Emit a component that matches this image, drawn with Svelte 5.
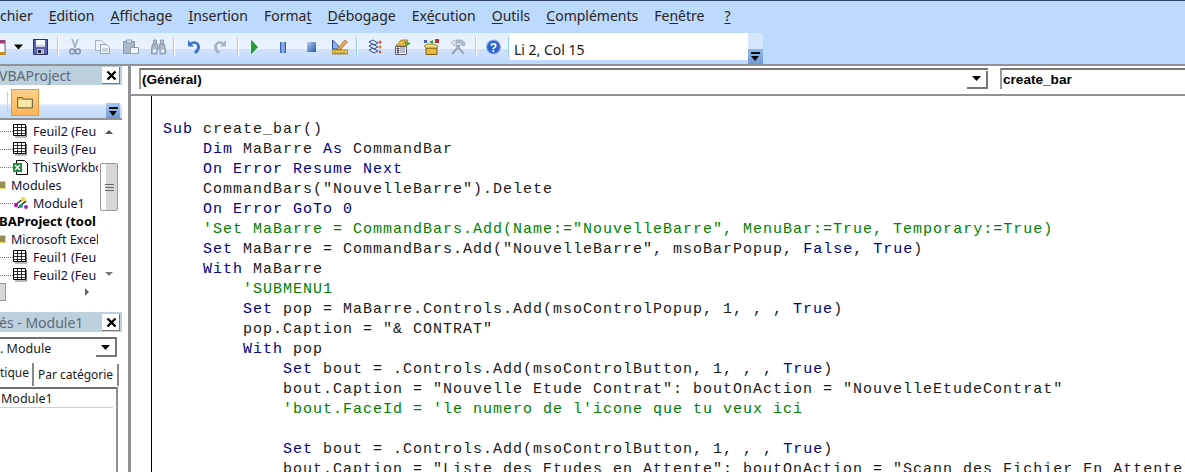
<script>
	const menus = [
		['', 'chier'], ['E', 'dition'], ['A', 'ffichage'], ['I', 'nsertion'], ['Forma', 't', ''],
		['D', 'ébogage'], ['Ex', 'é', 'cution'], ['O', 'utils'], ['C', 'ompléments'], ['Fe', 'n', 'être'], ['?', '']
	];

	const K = 'k';
	const C = 'c';
	// every line: list of [class, text]
	const code = [
		[[K, 'Sub'], ['', ' create_bar()']],
		[['', '    '], [K, 'Dim'], ['', ' MaBarre '], [K, 'As'], ['', ' CommandBar']],
		[['', '    '], [K, 'On Error Resume Next']],
		[['', '    CommandBars("NouvelleBarre").Delete']],
		[['', '    '], [K, 'On Error GoTo 0']],
		[['', '    '], [C, `'Set MaBarre = CommandBars.Add(Name:="NouvelleBarre", MenuBar:=True, Temporary:=True)`]],
		[['', '    '], [K, 'Set'], ['', ' MaBarre = CommandBars.Add("NouvelleBarre", msoBarPopup, '], [K, 'False'], ['', ', '], [K, 'True'], ['', ')']],
		[['', '    '], [K, 'With'], ['', ' MaBarre']],
		[['', '        '], [C, `'SUBMENU1`]],
		[['', '        '], [K, 'Set'], ['', ' pop = MaBarre.Controls.Add(msoControlPopup, 1, , , '], [K, 'True'], ['', ')']],
		[['', '        pop.Caption = "& CONTRAT"']],
		[['', '        '], [K, 'With'], ['', ' pop']],
		[['', '            '], [K, 'Set'], ['', ' bout = .Controls.Add(msoControlButton, 1, , , '], [K, 'True'], ['', ')']],
		[['', '            bout.Caption = "Nouvelle Etude Contrat": boutOnAction = "NouvelleEtudeContrat"']],
		[['', '            '], [C, `'bout.FaceId = 'le numero de l'icone que tu veux ici`]],
		[['', ' ']],
		[['', '            '], [K, 'Set'], ['', ' bout = .Controls.Add(msoControlButton, 1, , , '], [K, 'True'], ['', ')']],
		[['', '            bout.Caption = "Liste des Etudes en Attente": boutOnAction = "Scann des Fichier En Attente"']]
	];

	const tree = [
		['sheet', 'Feuil2 (Feu', ''],
		['sheet', 'Feuil3 (Feu', ''],
		['book', 'ThisWorkbo', ''],
		['folder', 'Modules', 'low'],
		['module', 'Module1', ''],
		['', 'BAProject (tool', 'bold'],
		['folder', 'Microsoft Excel', 'low'],
		['sheet', 'Feuil1 (Feu', ''],
		['sheet', 'Feuil2 (Feu', '']
	];
</script>

{#snippet closeIcon()}
	<svg width="11" height="11" viewBox="0 0 11 11"><path d="M1.500 1.500l8 8M9.500 1.500l-8 8" stroke="#000" stroke-width="2.400"/></svg>
{/snippet}

<div class="vbe">
	<nav class="menubar">
		{#each menus as m}
			<span class="menu">
				{#if m.length === 3}{m[0]}<u>{m[1]}</u>{m[2]}{:else if m[0] === ''}{m[1]}{:else}<u>{m[0].slice(-1)}</u>{m[1]}{/if}
			</span>
		{/each}
	</nav>

	<div class="toolbar">
		<div class="tools">
			<svg class="ic" style="width:6px" viewBox="0 0 6 16"><rect x="-7" y="1.500" width="12" height="12" fill="#fff" stroke="#6a5a70"/><rect x="-7" y="1.500" width="12" height="3" fill="#a83a78"/><rect x="-7" y="13" width="13" height="3" fill="#c89020"/></svg>
			<svg class="ic" style="width:9px;margin-left:8px" viewBox="0 0 9 16"><path d="M0 5.500h9L4.500 10.500z" fill="#000"/></svg>
			<svg class="ic" style="width:15px;margin-left:10px" viewBox="0 0 15 16"><path d="M.5.500h14v15H.5z" fill="#5563b0" stroke="#2a3070"/><path d="M3 1h9v7H3z" fill="#f4f6fb"/><path d="M3 6h9v2H3z" fill="#c8d0e8"/><path d="M4 10h7v5H4z" fill="#b4bcc8"/><path d="M5 11h3v3H5z" fill="#222"/></svg>
			<i class="sep" style="margin-left:10px"></i>
			<svg class="ic" style="width:12px;margin-left:10px" viewBox="0 0 12 16"><path d="M3 0l3.500 9M9 0L5.500 9" fill="none" stroke="#a4b3c6" stroke-width="1.800"/><circle cx="3.200" cy="12.500" r="2.400" fill="none" stroke="#7f92ae" stroke-width="1.500"/><circle cx="8.800" cy="12.500" r="2.400" fill="none" stroke="#7f92ae" stroke-width="1.500"/></svg>
			<svg class="ic" style="width:15px;margin-left:14px" viewBox="0 0 15 16"><path d="M.5 1.500h6l3 3v7H.5z" fill="#eef2f8" stroke="#a4b3c6"/><path d="M5.500 5.500h6l3 3v6h-9z" fill="#f6f8fb" stroke="#8ea1b8"/><path d="M7 10h6M7 12h6" stroke="#9fb0c4"/></svg>
			<svg class="ic" style="width:16px;margin-left:13px" viewBox="0 0 16 16"><path d="M.5 2.500h11v12H.5z" fill="#a9b8ca" stroke="#8496ae"/><path d="M3.500 1h5v3h-5z" fill="#dfe6ee" stroke="#8496ae"/><path d="M7.500 8.500h8v6h-8z" fill="#f2f5f9" stroke="#8ea1b8"/></svg>
			<svg class="ic" style="width:15px;margin-left:12px" viewBox="0 0 15 16"><path d="M2.500 1h3v4h-3zM9.500 1h3v4h-3z" fill="#b4c1d2" stroke="#8a9bb2"/><path d="M1.500 5h5v3h2V5h5l1 5v5H9V10H6v5H.5v-5z" fill="#a9b8ca" stroke="#8a9bb2"/><path d="M2 10.500h3v3H2zM10 10.500h3v3h-3z" fill="#eef2f8"/></svg>
			<i class="sep" style="margin-left:8px"></i>
			<svg class="ic" style="width:13px;margin-left:12px" viewBox="0 0 13 16"><path d="M1 1v6.500h6L5 5.500C7 4 10 4.800 10 7.500c0 2-1.200 3.800-3 5l1.500 2.500C11 14 13 11 13 8 13 3 7.500.500 3.500 3.500z" fill="#3a78c8"/></svg>
			<svg class="ic" style="width:13px;margin-left:14px" viewBox="0 0 13 16"><path d="M12 1v6.500H6L8 5.500C6 4 3 4.800 3 7.500c0 2 1.200 3.800 3 5L4.500 15C2 14 0 11 0 8 0 3 5.500.500 9.500 3.500z" fill="#a3b6cc"/></svg>
			<i class="sep" style="margin-left:11px"></i>
			<svg class="ic" style="width:7px;margin-left:12px" viewBox="0 0 7 16"><path d="M.5 1.500l6 6.500-6 6.500z" fill="#22a030" stroke="#107020" stroke-width=".6"/></svg>
			<svg class="ic" style="width:6px;margin-left:22px" viewBox="0 0 6 16"><path d="M.5 3.500h1.500v10H.5zM4 3.500h1.500v10H4z" fill="#cfe0f6" stroke="#2f5fbc"/></svg>
			<svg class="ic" style="width:9px;margin-left:21px" viewBox="0 0 9 16"><defs><linearGradient id="stopfill" x1="0" y1="0" x2="1" y2="1"><stop offset="0" stop-color="#b4d0f0"/><stop offset="1" stop-color="#2455ac"/></linearGradient></defs><rect y="3" width="9" height="10" fill="url(#stopfill)"/></svg>
			<svg class="ic" style="width:16px;margin-left:16px" viewBox="0 0 16 16"><path d="M.5 1l9 9H.5z" fill="#8fb4ea" stroke="#2a4a9c"/><path d="M5 10l8-9 2.500 2-7.500 8z" fill="#e8a850" stroke="#a06020" stroke-width=".7"/><path d="M0 11h16v4H0z" fill="#eac850" stroke="#806010" stroke-width=".7"/><path d="M3 13v2M6 13v2M9 13v2M12 13v2" stroke="#705010" stroke-width=".7"/></svg>
			<i class="sep" style="margin-left:9px"></i>
			<svg class="ic" style="width:15px;margin-left:10px" viewBox="0 0 15 16"><path d="M1 3l4-2 5 3-4 2zM1 7l4-2 5 3-4 2zM1 11l4-2 5 3-4 2z" fill="#dfe8f6" stroke="#2f4b96" stroke-width="1"/><path d="M12 2v12" stroke="#d8a040" stroke-dasharray="1 1"/><circle cx="12" cy="3" r="1.500" fill="#d05030"/><circle cx="12" cy="8" r="1.500" fill="#e08020"/><circle cx="12" cy="13" r="1.300" fill="#d05030"/></svg>
			<svg class="ic" style="width:16px;margin-left:12px" viewBox="0 0 16 16"><path d="M.5 7.500h11v8H.5z" fill="#fff" stroke="#5a5a6a"/><path d="M2 9h2v1H2zM5 9h5M2 11h2v1H2zM5 11h5M2 13h2v1H2zM5 13h5" stroke="#50507a" stroke-width=".8"/><path d="M1 7l5-6h7l-3 6z" fill="#e8b840" stroke="#906a20" stroke-width=".7"/><path d="M9 2l7 2-5 4z" fill="#60a048"/></svg>
			<svg class="ic" style="width:16px;margin-left:12px" viewBox="0 0 16 16"><path d="M3 9h11v6.500H3z" fill="#e9b83c" stroke="#7a5a18"/><path d="M1 7l3-2h7l4 2-1 2H3z" fill="#f6dc80" stroke="#7a5a18" stroke-width=".7"/><rect x="1" y="1" width="3" height="3" fill="#4060b8"/><rect x="12" y="0" width="4" height="4" fill="#c03020"/><path d="M6 3l4-2v4z" fill="#38a040"/></svg>
			<svg class="ic" style="width:16px;margin-left:11px" viewBox="0 0 16 16"><path d="M2 15L10 6M14 15L6 6" stroke="#98a9bd" stroke-width="2.200"/><path d="M6 1h6l3 3v2l-2 1-3-3H6z" fill="#b0bdcc" stroke="#8c9db2" stroke-width=".6"/><path d="M1 4l3-3 3 3-3 3z" fill="#d4dce6" stroke="#9aaabc" stroke-width=".6"/></svg>
			<i class="sep" style="margin-left:10px"></i>
			<svg class="ic" style="width:15px;margin-left:9px" viewBox="0 0 15 16"><circle cx="7.500" cy="8" r="6.800" fill="#2a62d0" stroke="#7fa2e0" stroke-width="1.200"/><text x="7.500" y="12.500" text-anchor="middle" class="q">?</text></svg>
			<i class="sep" style="margin-left:8px"></i>
		</div>
		<div class="status">Li 2, Col 15</div>
		<div class="chev tool-chev"><b></b><em></em></div>
	</div>

	<div class="work">
		<aside class="side">
			<div class="title"><span>VBAProject</span><button class="close">{@render closeIcon()}</button></div>
			<div class="minibar">
				<i class="minisep"></i>
				<div class="foldbtn">
					<svg width="16" height="14" viewBox="0 0 16 14"><path d="M.5 2.500h5l1 1.500h9v9H.5z" fill="#d8b850" stroke="#6f6a50"/><path d="M1.500 5h13v7h-13z" fill="#f6e7a8"/></svg>
				</div>
				<div class="chev mini-chev"><b></b><em></em></div>
			</div>
			<div class="tree">
				<div class="rows">
					{#each tree as t}
						<div class="row {t[2]}">
							{#if t[0] === 'folder'}
								<svg class="node" width="6" height="10" viewBox="0 0 6 10"><rect x="-4" y="1" width="10" height="8" fill="#e8d868"/><path d="M0 3h5M0 5h5M0 7h5" stroke="#444"/></svg>
							{:else if t[0]}
								<i class="dots"></i>
								{#if t[0] === 'sheet'}
									<svg class="leaf" width="15" height="14" viewBox="0 0 15 14"><path d="M.5.500h12v11H.5z" fill="#fff" stroke="#000"/><path d="M.5 3.500h12M.5 6.500h12M.5 9.500h12M4.500.5v11M8.500.5v11" stroke="#000" stroke-width=".8"/><path d="M13.500 2v11H2" fill="none" stroke="#777"/></svg>
								{:else if t[0] === 'book'}
									<svg class="leaf" width="15" height="15" viewBox="0 0 15 15"><path d="M3.500.500h8l3 3v11h-11z" fill="#fff" stroke="#000"/><path d="M0 3h9v9H0z" fill="#1b8c3c"/><path d="M2 5l5 5M7 5l-5 5" stroke="#fff" stroke-width="1.300"/></svg>
								{:else}
									<svg class="leaf" width="15" height="14" viewBox="0 0 15 14"><path d="M2 9l8-6M5 12l8-7" stroke="#222" stroke-width="1.400"/><circle cx="10" cy="3" r="2.200" fill="#e8e040"/><circle cx="3" cy="9" r="2.200" fill="#b020b0"/><circle cx="8" cy="10" r="2" fill="#20a090"/><circle cx="13" cy="11" r="2" fill="#b020b0"/></svg>
								{/if}
							{/if}
							<span>{t[1]}</span>
						</div>
					{/each}
				</div>
				<div class="vscroll">
					<svg width="10" height="6" viewBox="0 0 10 6"><path d="M1 5h8L5 1z" fill="#555"/></svg>
					<div class="thumb"><i></i><i></i><i></i></div>
					<svg class="down" width="10" height="6" viewBox="0 0 10 6"><path d="M1 1h8L5 5z" fill="#777"/></svg>
				</div>
				<div class="hscroll">
					<div class="hthumb"></div>
					<svg width="6" height="10" viewBox="0 0 6 10"><path d="M1 1v8l4-4z" fill="#666"/></svg>
				</div>
			</div>
			<div class="title props"><span>és - Module1</span><button class="close">{@render closeIcon()}</button></div>
			<div class="combo"><span>. Module</span><div class="cbtn"><svg width="9" height="5" viewBox="0 0 9 5"><path d="M0 0h9L4.500 5z" fill="#000"/></svg></div></div>
			<div class="tabs">
				<div class="tab on">tique</div>
				<div class="tab">Par catégorie</div>
			</div>
			<div class="proplist"><div class="prop">Module1</div></div>
		</aside>

		<div class="splitter"></div>

		<main class="editor">
			<div class="combos">
				<div class="objbox"><span>(Général)</span><div class="cbtn"><svg width="9" height="5" viewBox="0 0 9 5"><path d="M0 0h9L4.500 5z" fill="#000"/></svg></div></div>
				<div class="procbox"><span>create_bar</span></div>
			</div>
			<div class="pane">
				<div class="margin"></div>
				<pre class="code">{#each code as line}<div class="line">{#each line as part}<span class={part[0]}>{part[1]}</span>{/each}</div>{/each}</pre>
			</div>
		</main>
	</div>
</div>

<style>
	:global(body) {
		margin: 0;
		background: #fff;
	}
	.vbe {
		width: 1185px;
		height: 472px;
		overflow: hidden;
		display: flex;
		flex-direction: column;
		background: #bcd9fe;
		font-family: "Open Sans", "Noto Sans", sans-serif;
		color: #1a1a1a;
		border-top: 1px solid #2a4060;
		box-sizing: border-box;
	}
	.menubar {
		height: 32px;
		flex: none;
		box-sizing: border-box;
		padding-bottom: 4px;
		display: flex;
		align-items: center;
		gap: 16px;
		font-family: "Noto Sans", sans-serif;
		font-size: 14px;
		white-space: nowrap;
		color: #2a2420;
	}
	.menu:last-child {
		margin-left: 4px;
	}
	.menu u {
		text-underline-offset: 2px;
	}
	.toolbar {
		height: 31px;
		flex: none;
		display: flex;
		align-items: flex-start;
		border-bottom: 2px solid #8f9296;
	}
	.tools {
		width: 510px;
		height: 27px;
		display: flex;
		align-items: center;
		flex: none;
		background: linear-gradient(#e4effe 0, #eaf3ff 58%, #cfe2fb 60%, #c6dcfb 100%);
	}
	.ic {
		flex: none;
		height: 16px;
		display: block;
	}
	.q {
		font: bold 12px "Liberation Sans", sans-serif;
		fill: #fff;
	}
	.sep {
		flex: none;
		width: 1px;
		height: 19px;
		background: #fff;
		box-shadow: -1px 0 0 #9cd0f8;
	}
	.status {
		width: 238px;
		height: 27px;
		background: #fff;
		flex: none;
		box-sizing: border-box;
		padding: 7px 4px 0;
		font-size: 14px;
		line-height: 20px;
		font-family: "Noto Sans", sans-serif;
	}
	.chev {
		background: linear-gradient(#a8c8f2, #6f9bd6);
		position: relative;
		flex: none;
	}
	.chev b {
		position: absolute;
		left: 3px;
		top: 4px;
		width: 9px;
		height: 2px;
		background: #111;
	}
	.chev em {
		position: absolute;
		left: 3px;
		top: 8px;
		border-left: 4.500px solid transparent;
		border-right: 4.500px solid transparent;
		border-top: 5px solid #000;
	}
	.tool-chev {
		width: 15px;
		height: 31px;
		background: linear-gradient(#d4e5fc 0, #d4e5fc 50%, #92b8ec 52%, #6f9bd6 100%);
	}
	.tool-chev b {
		top: 19px;
	}
	.tool-chev em {
		top: 23px;
	}
	.work {
		flex: 1;
		min-height: 0;
		display: flex;
		background: #fff;
	}
	.side {
		width: 122px;
		flex: none;
		display: flex;
		flex-direction: column;
		background: #fff;
		font-family: "Noto Sans", sans-serif;
		font-size: 12.500px;
	}
	.title {
		height: 19px;
		background: #bdd0dd;
		color: #5b6b7c;
		font-size: 14px;
		display: flex;
		align-items: center;
		justify-content: space-between;
		padding-right: 1px;
		flex: none;
		white-space: nowrap;
		overflow: hidden;
	}
	.title span {
		margin-left: -1px;
	}
	.close {
		width: 18px;
		height: 17px;
		border: 0;
		padding: 0;
		margin-right: 1px;
		background: #fff;
		box-shadow: inset -1px -1px 0 #777;
		display: grid;
		place-items: center;
	}
	.minibar {
		height: 32px;
		margin-top: 1px;
		background: linear-gradient(#fff 0, #fff 55%, #d6e6fc 60%, #c0d8fa 100%);
		position: relative;
		display: flex;
		align-items: center;
		flex: none;
	}
	.minisep {
		width: 1px;
		height: 20px;
		margin-left: 7px;
		background: #bcd0ea;
	}
	.foldbtn {
		width: 28px;
		height: 27px;
		margin-left: 3px;
		background: linear-gradient(#ffd08a, #fdb55a);
		border: 1px solid #f09838;
		box-sizing: border-box;
		display: grid;
		place-items: center;
	}
	.mini-chev {
		position: absolute;
		right: 2px;
		bottom: 0;
		width: 14px;
		height: 15px;
	}
	.tree {
		height: 192px;
		flex: none;
		position: relative;
		overflow: hidden;
		border-top: 2px solid #8f9296;
	}
	.rows {
		position: absolute;
		left: 0;
		top: 2px;
		width: 98px;
		overflow: hidden;
	}
	.row {
		height: 18px;
		display: flex;
		align-items: center;
		white-space: nowrap;
		color: #101038;
	}
	.row span {
		margin-left: 5px;
	}
	.row.low span {
		margin-left: 5px;
	}
	.row.bold {
		font-weight: 700;
		color: #000;
		font-size: 13px;
	}
	.row.bold span {
		margin-left: -1px;
	}
	.node {
		flex: none;
	}
	.dots {
		flex: none;
		width: 13px;
		border-top: 1px dotted #777;
	}
	.leaf {
		flex: none;
	}
	.vscroll {
		position: absolute;
		left: 100px;
		top: 0;
		width: 18px;
		height: 157px;
		display: flex;
		flex-direction: column;
		align-items: center;
	}
	.vscroll svg {
		margin-top: 9px;
		flex: none;
	}
	.vscroll .down {
		margin-top: auto;
	}
	.thumb {
		margin-top: 28px;
		width: 18px;
		height: 48px;
		flex: none;
		box-sizing: border-box;
		border: 1px solid #999;
		border-radius: 2px;
		background: linear-gradient(90deg, #fff 30%, #d7d7d7 30%);
		display: flex;
		flex-direction: column;
		justify-content: center;
		gap: 2px;
		align-items: center;
	}
	.thumb i {
		width: 9px;
		height: 1px;
		background: #666;
	}
	.hscroll {
		position: absolute;
		left: 0;
		top: 163px;
		width: 90px;
		height: 18px;
		display: flex;
		align-items: center;
		justify-content: space-between;
	}
	.hthumb {
		width: 6px;
		height: 18px;
		box-sizing: border-box;
		border: 1px solid #999;
		border-left: 0;
		background: #d7d7d7;
	}
	.props {
		height: 20px;
	}
	.combo {
		margin-top: 5px;
		height: 20px;
		width: 117px;
		box-sizing: border-box;
		border-top: 2px solid #707070;
		display: flex;
		align-items: center;
		justify-content: space-between;
		flex: none;
		font-size: 12.500px;
	}
	.cbtn {
		width: 21px;
		height: 18px;
		box-sizing: border-box;
		border-right: 2px solid #777;
		border-bottom: 2px solid #777;
		display: grid;
		place-items: center;
	}
	.tabs {
		display: flex;
		height: 23px;
		margin-top: 6px;
		flex: none;
		align-items: flex-end;
		font-size: 12px;
	}
	.tab {
		height: 22px;
		line-height: 22px;
		box-sizing: border-box;
		padding: 0 4px;
		border-right: 2px solid #888;
		flex: none;
	}
	.tab.on {
		width: 34px;
		height: 23px;
		padding: 0;
		line-height: 20px;
	}
	.proplist {
		flex: 1;
		margin-top: 1px;
		width: 118px;
		box-sizing: border-box;
		border-top: 2px solid #707070;
		border-right: 2px solid #909090;
	}
	.prop {
		height: 18px;
		line-height: 20px;
		font-size: 12.500px;
		border-bottom: 1px solid #d0d0d0;
		padding-left: 1px;
		margin-right: 3px;
	}
	.splitter {
		width: 9px;
		flex: none;
		background: #fff;
		box-sizing: border-box;
		border-right: 3px solid #8f9296;
	}
	.editor {
		flex: 1;
		min-width: 0;
		display: flex;
		flex-direction: column;
	}
	.combos {
		height: 28px;
		flex: none;
		display: flex;
		border-bottom: 2px solid #8f9296;
		font: bold 13.600px "Liberation Sans", sans-serif;
		color: #000;
	}
	.objbox {
		width: 849px;
		margin: 2px 0 0 8px;
		height: 21px;
		border-top: 2px solid #777;
		border-left: 2px solid #999;
		box-sizing: border-box;
		display: flex;
		align-items: center;
		justify-content: space-between;
		padding-left: 1px;
	}
	.procbox {
		flex: 1;
		margin: 2px 0 0 12px;
		height: 21px;
		border-top: 2px solid #777;
		border-left: 2px solid #999;
		box-sizing: border-box;
		display: flex;
		align-items: center;
		padding-left: 1px;
	}
	.pane {
		flex: 1;
		min-height: 0;
		display: flex;
		overflow: hidden;
	}
	.margin {
		width: 20px;
		flex: none;
		border-right: 1px solid #000;
	}
	.code {
		margin: 0;
		padding: 24px 0 0 11px;
		font-family: "Liberation Mono", "Courier New", monospace;
		font-size: 15px;
		letter-spacing: 1px;
		line-height: 20px;
		color: #1a1a1a;
		white-space: pre;
	}
	.line {
		height: 20px;
	}
	.k {
		color: #00007f;
	}
	.c {
		color: #007f00;
	}
</style>
